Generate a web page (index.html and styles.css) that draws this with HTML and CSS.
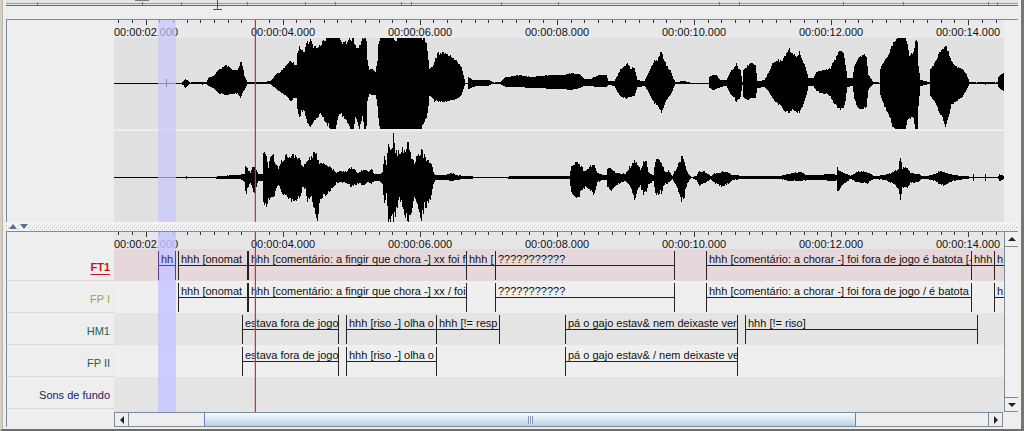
FILE: index.html
```
<!DOCTYPE html>
<html lang="pt">
<head>
<meta charset="utf-8">
<title>Timeline</title>
<link rel="stylesheet" href="styles.css">
</head>
<body>
<main class="window">
  <div class="overview">
    <svg class="overview-marks" viewBox="0 0 1012 12" preserveAspectRatio="none" shape-rendering="crispEdges" aria-hidden="true">
      <rect width="1012" height="6" fill="#e4e4e4"/>
      <path d="M129 0h14" stroke="#777" stroke-width="1"/>
      <path d="M0 3.5h1012" stroke="#9a9a9a"/>
      <path d="M0 5.5h1012" stroke="#666"/>
      <path d="M31.5 2v3M136.5 2v3M175.5 2v3M241.5 2v3M299.5 2v3M329.5 2v3M395.5 2v3M405.5 2v3M495.5 2v3M552.5 2v3M713.5 2v3M733.5 2v3M837.5 2v3M897.5 2v3M982.5 2v3M991.5 2v3" stroke="#777"/>
      <path d="M211.5 0v9M207 9.5h9" stroke="#d01418"/>
    </svg>
  </div>

  <section class="panel waves">
    <div class="names"></div>
    <div class="lanes">
      <div class="ruler">
        <svg class="ticks" viewBox="0 0 890 6" preserveAspectRatio="none" shape-rendering="crispEdges" aria-hidden="true"></svg>
        <div class="times"><span>00:00:02.000</span><span>00:00:04.000</span><span>00:00:06.000</span><span>00:00:08.000</span><span>00:00:10.000</span><span>00:00:12.000</span><span class="last">00:00:14.000</span></div>
      </div>
      <svg class="wave" id="wave-left" viewBox="114 38 890 91" preserveAspectRatio="none" aria-label="Canal 1"></svg>
      <svg class="wave" id="wave-right" viewBox="114 131 890 91" preserveAspectRatio="none" aria-label="Canal 2"></svg>
      <div class="selection"></div>
      <div class="playhead"></div>
    </div>
    <div class="gutter"></div>
  </section>

  <div class="splitter">
    <button type="button" aria-label="Recolher acima"><svg viewBox="0 0 8 5"><path d="M0 5L4 0L8 5Z" fill="#5a6f8e"/></svg></button>
    <button type="button" aria-label="Recolher abaixo"><svg viewBox="0 0 8 5"><path d="M0 0H8L4 5Z" fill="#5a6f8e"/></svg></button>
  </div>

  <section class="panel tiers">
    <div class="names">
      <div class="corner"></div>
      <div class="name active">FT1</div>
      <div class="name olive">FP I</div>
      <div class="name teal">HM1</div>
      <div class="name teal">FP II</div>
      <div class="name navy">Sons de fundo</div>
    </div>
    <div class="body">
      <div class="view">
        <div class="lanes">
          <div class="ruler">
            <svg class="ticks" viewBox="0 0 890 6" preserveAspectRatio="none" shape-rendering="crispEdges" aria-hidden="true"></svg>
            <div class="times"><span>00:00:02.000</span><span>00:00:04.000</span><span>00:00:06.000</span><span>00:00:08.000</span><span>00:00:10.000</span><span>00:00:12.000</span><span class="last">00:00:14.000</span></div>
          </div>
          <div class="tier current">
            <i style="flex-grow:44"></i><div class="note picked" style="flex-grow:18"><p>hh</p></div><i style="flex-grow:2"></i><div class="note" style="flex-grow:70"><p>hhh [onomat</p></div><div class="note" style="flex-grow:219"><p>hhh [comentário: a fingir que chora -] xx foi f</p></div><div class="note joined" style="flex-grow:29"><p>hhh [</p></div><div class="note joined" style="flex-grow:179"><p>???????????</p></div><i style="flex-grow:31"></i><div class="note" style="flex-grow:266"><p>hhh [comentário: a chorar -] foi fora de jogo é batota [-</p></div><div class="note joined" style="flex-grow:23"><p>hhh</p></div><div class="note joined cut" style="flex-grow:9"><p>h</p></div>
          </div>
          <div class="tier light">
            <i style="flex-grow:64"></i><div class="note" style="flex-grow:70"><p>hhh [onomat</p></div><div class="note" style="flex-grow:219"><p>hhh [comentário: a fingir que chora -] xx / foi f</p></div><i style="flex-grow:28"></i><div class="note" style="flex-grow:180"><p>???????????</p></div><i style="flex-grow:31"></i><div class="note" style="flex-grow:266"><p>hhh [comentário: a chorar -] foi fora de jogo / é batota [</p></div><i style="flex-grow:22"></i><div class="note cut" style="flex-grow:10"><p>h</p></div>
          </div>
          <div class="tier">
            <i style="flex-grow:128"></i><div class="note" style="flex-grow:97"><p>estava fora de jogo</p></div><i style="flex-grow:7"></i><div class="note" style="flex-grow:91"><p>hhh [riso -] olha o</p></div><div class="note joined" style="flex-grow:63"><p>hhh [!= resp</p></div><i style="flex-grow:65"></i><div class="note" style="flex-grow:173"><p>pá o gajo estav&amp; nem deixaste ver</p></div><i style="flex-grow:7"></i><div class="note" style="flex-grow:233"><p>hhh [!= riso]</p></div><i style="flex-grow:26"></i>
          </div>
          <div class="tier light">
            <i style="flex-grow:128"></i><div class="note" style="flex-grow:97"><p>estava fora de jogo</p></div><i style="flex-grow:7"></i><div class="note" style="flex-grow:91"><p>hhh [riso -] olha o</p></div><i style="flex-grow:128"></i><div class="note" style="flex-grow:173"><p>pá o gajo estav&amp; / nem deixaste ve</p></div><i style="flex-grow:266"></i>
          </div>
          <div class="tier empty"></div>
          <div class="selection"></div>
          <div class="playhead"></div>
        </div>
        <div class="vbar">
          <button type="button" aria-label="Subir"><svg viewBox="0 0 8 4"><path d="M0 4L4 0L8 4Z" fill="#222"/></svg></button>
          <button type="button" aria-label="Descer"><svg viewBox="0 0 8 4"><path d="M0 0H8L4 4Z" fill="#222"/></svg></button>
        </div>
      </div>
      <div class="hbar">
        <button type="button" aria-label="Esquerda"><svg viewBox="0 0 4 8"><path d="M4 0V8L0 4Z" fill="#222"/></svg></button>
        <div class="track"><div class="thumb"><b></b></div></div>
        <button type="button" aria-label="Direita"><svg viewBox="0 0 4 8"><path d="M0 0V8L4 4Z" fill="#222"/></svg></button>
      </div>
    </div>
  </section>
</main>
<script src="wave.js"></script>
</body>
</html>
```
FILE: styles.css
```
* { box-sizing: border-box; }
html, body { height: 100%; }
body {
  margin: 0;
  background: #eee;
  font: 11px/14px "Liberation Sans", Arial, sans-serif;
  color: #111;
}
button { margin: 0; padding: 0; border: 0; background: none; display: flex; align-items: center; justify-content: center; }
svg { display: block; }
p { margin: 0; }

.window {
  min-height: 100%;
  display: flex;
  flex-direction: column;
  padding: 0 3px 2px 4px;
  border-left: 2px solid #d5cec2;
  border-right: 3px solid #77776f;
  border-bottom: 2px solid #6f6d66;
  box-shadow: inset 1px 0 #b9b5ac;
}
.overview { height: 19px; }
.overview-marks { width: 100%; height: 12px; }

.panel {
  display: flex;
  border-top: 1px solid #7a8a99;
  border-left: 1px solid #7a8a99;
}
.names { flex: 0 0 107px; }
.lanes { position: relative; flex: 1; min-width: 0; }
.gutter { flex: 0 0 14px; }

.ruler { height: 18px; background: #e9e9ec; }
.tiers .ruler { height: 17px; background: #e6e6e9; }
.ticks { width: 100%; height: 6px; }
.times { display: flex; line-height: 12px; white-space: nowrap; }
.times span { flex: 137 1 0; min-width: 0; }
.times .last { flex-grow: 68; }

.wave { width: 100%; height: 91px; background: #e0e0e0; }
.wave + .wave { margin-top: 2px; }

.selection, .playhead { position: absolute; top: 0; bottom: 0; pointer-events: none; }
.selection { left: calc(100% * 44 / 890); width: calc(100% * 18 / 890); background: rgba(200, 200, 255, .7); }
.tiers .selection { background: rgba(198, 198, 255, .85); }
.playhead { left: calc(100% * 141 / 890); width: 1px; background: #e0282e; box-shadow: -1px 0 rgba(224, 60, 60, .25); z-index: 3; }

.splitter {
  height: 9px;
  display: flex;
  align-items: center;
  gap: 3px;
  padding-left: 3px;
  background-color: #f4f4f4;
  background-image: linear-gradient(90deg, #b4b4bc 1px, transparent 1px), linear-gradient(90deg, #b4b4bc 1px, transparent 1px), linear-gradient(90deg, #b4b4bc 1px, transparent 1px);
  background-size: 4px 1px;
  background-repeat: repeat-x;
  background-position: 0 3px, 2px 5px, 0 7px;
}
.splitter button { height: 9px; background: #f4f4f4; }
.splitter button, .splitter svg { width: 8px; }
.splitter svg { height: 5px; }

.tiers { flex: 1; }
.tiers .names { display: flex; flex-direction: column; }
.corner { height: 17px; }
.name {
  height: 32px;
  padding-right: 4px;
  border-bottom: 1px solid #dcdcdc;
  line-height: 36px;
  text-align: right;
}
.active { color: #c01428; font-weight: bold; text-decoration: underline; text-underline-offset: 3px; text-decoration-thickness: 1px; }
.olive { color: #a8a038; }
.teal { color: #1c6058; }
.navy { color: #201c60; }

.body { flex: 1; min-width: 0; display: flex; flex-direction: column; }
.view { display: flex; flex: 1; }
.view .lanes { display: flex; flex-direction: column; }
.tier { display: flex; height: 32px; padding: 2px 0 1px; background: #e4e4e4; }
.tier.current { background: #e6d8da; }
.tier.light { background: #efefef; }
.tier.empty { flex: 1; }
.tier i { flex: 0 1 0; }
.note {
  position: relative;
  z-index: 2;
  flex: 0 1 0;
  min-width: 0;
  box-shadow: inset 1px 0 #222, inset -1px 0 #222;
}
.joined { box-shadow: inset -1px 0 #222; }
.cut { box-shadow: inset 1px 0 #222; }
.joined.cut { box-shadow: none; }
.note p { height: 15px; padding-left: 3px; border-bottom: 1px solid #222; overflow: hidden; white-space: nowrap; line-height: 17px; }
.joined p { padding-left: 2px; }
.picked { box-shadow: inset 1px 0 #54409a, inset -1px 0 #54409a; color: #302868; }
.picked p { border-color: #54409a; }

.vbar { flex: 0 0 14px; display: flex; flex-direction: column; justify-content: space-between; border-left: 1px solid #7a8a99; background: #f0f0f0; }
.vbar button { height: 15px; border-bottom: 1px solid #7a8a99; }
.vbar button + button { border-top: 1px solid #7a8a99; }
.vbar svg { width: 8px; height: 4px; }

.hbar { display: flex; height: 15px; margin-right: 15px; border: 1px solid #7a8a99; background: #eee; }
.hbar button { width: 13px; }
.hbar svg { width: 4px; height: 8px; }
.track { flex: 1; display: flex; border: solid #7a8a99; border-width: 0 1px; }
.thumb {
  flex: 652 1 0;
  display: flex;
  align-items: center;
  justify-content: center;
  border: solid #6382bf;
  border-width: 0 1px;
  background: linear-gradient(#f4f8fd, #dbe7f5 50%, #b8cfe5);
}
.track::before { content: ""; flex: 75 1 0; }
.track::after { content: ""; flex: 132 1 0; }
.thumb b { width: 5px; height: 8px; background: repeating-linear-gradient(90deg, #8295b0 0 1px, #eef3fa 1px 2px); }
```
FILE: wave.js
```
// Envelope rows: x, top, bottom.
const left = [114,82.5,83.5,165,82.5,83.5,166,79,87,167,82.5,83.5,181,82.5,83.5,185,79,87.5,190,82.5,83.5,194,82,84,202,82,84.5,206,82,84,208,78,86,213,76,88,218,70,93,226,65,95,232,70,94,237,70,93,239,66,96,240.5,60,98,242,65,93,244,76,90,247,82,84,262,82,84,270,81,84,275,75,88,280,72,92,287,63,97,290,61,102,293,63,99,296,66,97,297,52,108,299,46,118,301,50,111,304,52,110,306,43,120,310,40,126,313,46,122,316,48,118,320,46,114,323,40,118,326,38,122,330,38,129,335,38,129,338,38,115,341,44,115,346,42,120,350,39,129,353,38,129,355,46,118,357,49,123,359,45,129,362,40,118,364,38,129,366,40,125,367,60,100,369,70,94,372,69,95,375,72,94,377,60,105,378,45,120,380,38,129,393,38,129,395,40,129,397,38,129,421,38,129,424,40,120,426,42,118,428,60,105,429,69,96,432,67,97,434,62,101,437,54,101,442,53,102,447,54,101,452,58,100,457,62,98,461,67,95,463,75,89,465,82.5,83.5,467,82.5,83.5,468,77,89,472,80,87,480,80,86,488,80,86,491,81,84,494,82.5,83.5,500,82,84,505,77,87,512,76,87,520,75,87,530,77,88,540,76,88,550,75,89,560,75,89,572,73,90,579,74,88,584,79,86,590,79,86,598,75,87,606,75,87,608,81,85,614,81,86,617,76,92,620,69,96,625,66,98,627,63,98,630,68,97,634,68,96,637,80,87,644,81,86,647,75,90,651,67,98,654,60,103,657,60,104,660,52,110,661,51,114,663,58,107,666,66,100,670,70,95,673,79,88,675,82,84,684,81,84,690,82.5,83.5,708,82.5,83.5,709,77,88,713,75,90,716,75,89,720,80,87,726,80,86,730,72,94,734,68,98,736,64,102,738,68,99,740,70,97,742,82,85,743,70,97,747,66,100,750,63,98,755,66,98,757,81,88,764,80,87,768,73,91,772,64,98,777,60,104,781,62,106,785,55,112,789,49,113,793,54,110,796,57,111,799,52,113,802,60,107,805,67,99,808,78,86,813,78,86,816,72,91,821,70,93,827,69,94,830,69,96,832,62,101,835,60,105,838,52,108,843,52,109,845,65,100,847,78,87,852,78,86,854,66,99,857,59,107,860,56,109,863,54,108,866,58,106,868,75,90,871,79,86,873,82,84,879,82.5,83.5,880,69,95,884,60,106,888,54,115,892,45,125,895,39,129,898,38,129,905,38,129,907,45,122,909,56,117,913,52,118,915,42,129,917,42,129,918,66,105,920,80,86,929,82,84,930,69,96,935,62,103,939,52,112,943,48,120,945,46,125,948,52,117,951,60,105,956,67,101,962,69,97,966,74,90,969,82,84,976,82.5,83.5,985,81.5,84.5,995,82.5,83.5,997,82,84,998,77,87,1004,72,92];
const right = [114,177,178,185,177,178,186,176,179,187,177,178,210,177,178,222,176,179,232,175,179,240,175,179,244,173,182,245.5,164,196,247,168,188,250,173,183,253,165,192,255,168,190,258,174,181,262,174,181,263,154,203,266,153,207,268,168,198,270,154,199,273,155,198,275,165,190,278,168,186,282,160,192,286,157,198,290,156,200,295,158,198,299,160,198,303,168,186,305,162,190,307,158,199,311,158,197,314,150,210,316,155,220,319,162,205,322,163,196,327,165,195,331,169,189,336,172,183,344,172,182,351,168,186,358,173,184,364,169,184,368,172,182,371,168,183,374,174,181,379,174,181,382,172,184,384,153,205,386,165,195,388,140,222,391,152,218,393,136,222,395,152,213,399,153,200,402,148,205,405,150,215,408,145,222,411,158,210,414,164,195,417,156,202,421,151,218,424,157,205,428,162,203,431,165,198,433,172,184,435,175,180,445,175,180,451,173,181,455,175,180,465,176,179,480,177,178,508,176.5,178.5,569,176,179,571,165,192,575,163,196,579,164,195,583,170,188,586,170,187,590,166,190,594,165,194,597,173,182,602,175,180,606,175,180,607,168,188,611,169,190,616,173,184,625,174,181,630,166,186,634,162,198,637,163,190,640,170,186,643,162,194,646,162,192,648,172,184,653,175,181,655,160,195,661,161,192,664,172,184,668,171,183,672,176,179,675,170,184,679,162,194,681,156,201,684,163,195,687,173,183,691,177,178,696,176,180,699,171,185,704,172,184,710,176,179,715,173,183,722,172,186,727,172,184,732,175,180,745,176,179,765,176,179,780,176,179,788,174,181,800,172,181,806,175,180,820,175,180,828,174,181,836,175,181,837,168,190,840,171,188,844,173,183,850,176,179,856,172,182,867,172,183,873,176,179,885,175,180,893,172,184,898,168,188,900,156,199,902,168,187,906,167,188,910,173,183,918,174,182,921,176,179,932,175,180,940,171,184,945,172,185,952,175,181,965,176,179,972,177,178,973,174,181,974,177,178,984,177,178,985,174,181,986,177,178,997,177,178,999,174,181,1004,176,179];

// One vertical stroke per pixel column, with a rough edge that grows with amplitude.
function draw(id, rows, mid, floor, ceiling, rough) {
  let d = "", k = 0, seed = 7;
  const rand = () => (seed = (seed * 16807) % 2147483647) / 2147483647;
  for (let x = 114; x < 1004; x++) {
    while (rows[k + 5] !== undefined && rows[k + 3] <= x) k += 3;
    const x0 = rows[k], x1 = rows[k + 3];
    const t = (x - x0) / (x1 - x0);
    const lerp = n => rows[k + n] + (rows[k + 3 + n] - rows[k + n]) * t;
    const shake = v => Math.abs(v - mid) < 2 ? v : v + (rand() - 0.5) * Math.abs(v - mid) * rough;
    const top = lerp(1) <= floor ? floor : Math.max(floor, Math.round(shake(lerp(1))));
    const bottom = lerp(2) >= ceiling ? ceiling : Math.min(ceiling, Math.round(shake(lerp(2))));
    d += `M${x} ${top}h1V${Math.max(bottom, top + 1)}h-1z`;
  }
  document.getElementById(id).innerHTML = `<path d="${d}" shape-rendering="crispEdges"/>`;
}
draw("wave-left", left, 83, 38, 129, 0.1);
draw("wave-right", right, 177.5, 133, 222, 0.3);

// A tick every 200 ms, a long one at every labelled time.
let ticks = "";
for (let n = -2; n <= 62; n++) {
  const x = Math.floor(32 + n * 13.71) + 0.5;
  ticks += `M${x} 0v${n % 10 === 0 ? 5 : 3}`;
}
document.querySelectorAll(".ticks").forEach(svg => {
  svg.innerHTML = `<path d="${ticks}" stroke="#333"/>`;
});
```
